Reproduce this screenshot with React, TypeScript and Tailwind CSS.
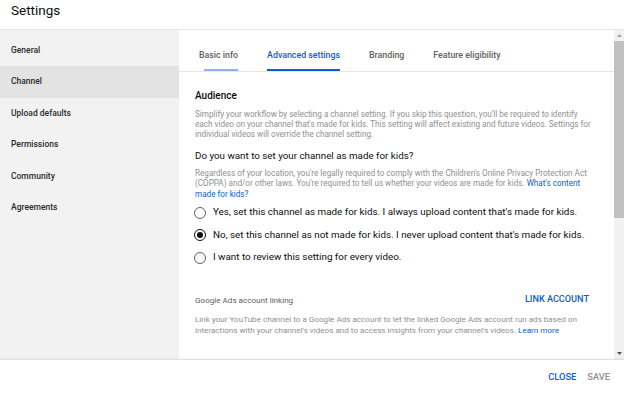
import React from "react";

const font = { fontFamily: "Roboto, 'Noto Sans', Arial, sans-serif" };

function Radio({ checked }: { checked?: boolean }) {
  return (
    <div
      className={`w-[12px] h-[12px] rounded-full border-[1.5px] flex items-center justify-center shrink-0 ${
        checked ? "border-[#0d0d0d]" : "border-[#606060]"
      }`}
    >
      {checked && <div className="w-[6px] h-[6px] rounded-full bg-[#0d0d0d]" />}
    </div>
  );
}

export default function App() {
  const nav = ["General", "Channel", "Upload defaults", "Permissions", "Community", "Agreements"];
  const tabs = ["Basic info", "Advanced settings", "Branding", "Feature eligibility"];
  return (
    <div
      className="w-[624px] h-[394px] bg-white flex flex-col overflow-hidden font-['Roboto',sans-serif]"
      style={font}
    >
      {/* header */}
      <div className="h-[30px] border-b border-[#e6e6e6] px-[11px] pt-[1px] shrink-0">
        <div className="text-[13.5px] leading-[18px] text-[#0d0d0d]">Settings</div>
      </div>
      {/* body */}
      <div className="flex h-[329px] shrink-0">
        <div className="w-[179px] bg-[#f2f2f2] pt-[4.5px] shrink-0">
          {nav.map((n) => (
            <div
              key={n}
              className={`h-[31.5px] flex items-center px-[11px] text-[8.5px] font-medium text-[#2b2b2b] ${
                n === "Channel" ? "bg-[#e3e3e3]" : ""
              }`}
            >
              {n}
            </div>
          ))}
        </div>
        <div className="flex-1 flex min-w-0">
          <div className="flex-1 min-w-0">
            {/* tabs */}
            <div className="h-[42px] border-b border-[#e6e6e6] flex pl-[20px] gap-[29px]">
              {tabs.map((t, i) => (
                <div key={t} className="flex flex-col pt-[19px]">
                  <div
                    className={`text-[8.8px] leading-[12px] font-medium whitespace-nowrap ${
                      i === 1 ? "text-[#065fd4]" : "text-[#606060]"
                    }`}
                  >
                    {t}
                  </div>
                  <div
                    className={`mt-[8px] h-[2px] ${
                      i === 1 ? "bg-[#065fd4]" : i === 0 ? "bg-[#8fb3ea] ml-[5px]" : ""
                    }`}
                  />
                </div>
              ))}
            </div>
            {/* content */}
            <div className="pl-[16px] pr-[15px] pt-[16.5px]">
              <div className="text-[10px] leading-[13px] font-medium text-[#0d0d0d]">Audience</div>
              <div className="mt-[7.5px] text-[8.15px] leading-[10px] text-[#909090] whitespace-nowrap">
                <div>
                  Simplify your workflow by selecting a channel setting. If you skip this question, you'll be required to identify
                </div>
                <div>
                  each video on your channel that's made for kids. This setting will affect existing and future videos. Settings for
                </div>
                <div>individual videos will override the channel setting.</div>
              </div>
              <div className="mt-[9.5px] text-[9.8px] leading-[13px] text-[#0d0d0d]">
                Do you want to set your channel as made for kids?
              </div>
              <div className="mt-[6px] text-[8.15px] leading-[10.5px] text-[#909090] whitespace-nowrap">
                <div>
                  Regardless of your location, you're legally required to comply with the Children's Online Privacy Protection Act
                </div>
                <div>
                  (COPPA) and/or other laws. You're required to tell us whether your videos are made for kids.{" "}
                  <span className="text-[#065fd4]">What's content</span>
                </div>
                <div className="text-[#065fd4]">made for kids?</div>
              </div>
              <div className="mt-[2.5px]">
                {[
                  ["Yes, set this channel as made for kids. I always upload content that's made for kids.", false],
                  ["No, set this channel as not made for kids. I never upload content that's made for kids.", true],
                  ["I want to review this setting for every video.", false],
                ].map(([label, checked]) => (
                  <div key={label as string} className="h-[22.5px] flex items-center gap-[7px] -ml-[1px]">
                    <Radio checked={checked as boolean} />
                    <div className="text-[9.85px] text-[#0d0d0d] whitespace-nowrap">{label as string}</div>
                  </div>
                ))}
              </div>
              <div className="mt-[25px] flex items-center justify-between pr-[10px] h-[12px]">
                <div className="text-[8.1px] text-[#606060]">Google Ads account linking</div>
                <div className="text-[9.15px] font-medium text-[#065fd4]">LINK ACCOUNT</div>
              </div>
              <div className="mt-[7.5px] text-[8.1px] leading-[11px] text-[#909090] whitespace-nowrap">
                <div>
                  Link your YouTube channel to a Google Ads account to let the linked Google Ads account run ads based on
                </div>
                <div>
                  interactions with your channel's videos and to access insights from your channel's videos.{" "}
                  <span className="text-[#065fd4]">Learn more</span>
                </div>
              </div>
            </div>
          </div>
          {/* scrollbar */}
          <div className="w-[10px] bg-[#f1f1f1] flex flex-col shrink-0">
            <div className="h-[11px] flex items-center justify-center">
              <svg width="5" height="3" viewBox="0 0 5 3">
                <path d="M0 3 L2.5 0 L5 3 Z" fill="#a3a3a3" />
              </svg>
            </div>
            <div className="h-[177px] bg-[#c1c1c1]" />
            <div className="flex-1" />
            <div className="h-[11px] flex items-center justify-center">
              <svg width="5" height="3" viewBox="0 0 5 3">
                <path d="M0 0 L2.5 3 L5 0 Z" fill="#505050" />
              </svg>
            </div>
          </div>
        </div>
      </div>
      {/* footer */}
      <div className="flex-1 border-t border-[#e0e0e0] shadow-[0_-1px_2px_rgba(0,0,0,0.04)] flex items-center justify-end pr-[14px] gap-[11px]">
        <div className="text-[9.3px] font-medium text-[#065fd4]">CLOSE</div>
        <div className="text-[9.3px] font-medium text-[#909090]">SAVE</div>
      </div>
    </div>
  );
}
